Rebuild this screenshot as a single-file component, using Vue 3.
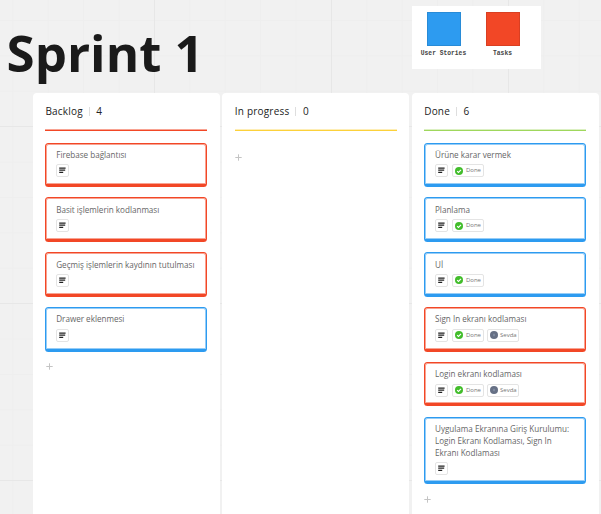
<script setup>
const columns = [
  {
    name: 'Backlog', count: 4, tone: 'red',
    cards: [
      { title: 'Firebase bağlantısı', tone: 'red' },
      { title: 'Basit işlemlerin kodlanması', tone: 'red' },
      { title: 'Geçmiş işlemlerin kaydının tutulması', tone: 'red' },
      { title: 'Drawer eklenmesi', tone: 'blue' },
    ],
  },
  { name: 'In progress', count: 0, tone: 'yellow', cards: [] },
  {
    name: 'Done', count: 6, tone: 'green',
    cards: [
      { title: 'Ürüne karar vermek', tone: 'blue', done: true },
      { title: 'Planlama', tone: 'blue', done: true },
      { title: 'Uİ', tone: 'blue', done: true },
      { title: 'Sign In ekranı kodlaması', tone: 'red', done: true, owner: 'Sevda' },
      { title: 'Login ekranı kodlaması', tone: 'red', done: true, owner: 'Sevda' },
      { title: 'Uygulama Ekranına Giriş Kurulumu: Login Ekranı Kodlaması, Sign In Ekranı Kodlaması', tone: 'blue' },
    ],
  },
]
const legend = [
  { label: 'User Stories', tone: 'blue' },
  { label: 'Tasks', tone: 'red' },
]
</script>

<template>
  <main class="board">
    <header class="top">
      <h1>Sprint 1</h1>
      <div class="legend">
        <div v-for="l in legend" :key="l.label" class="legend-item">
          <div class="swatch" :class="l.tone"></div>
          <span>{{ l.label }}</span>
        </div>
      </div>
    </header>
    <div class="columns">
      <section v-for="c in columns" :key="c.name" class="column">
        <div class="head" :class="c.tone">
          <span>{{ c.name }}</span><i></i><span>{{ c.count }}</span>
        </div>
        <div class="rule" :class="c.tone"></div>
        <div class="cards">
          <article v-for="k in c.cards" :key="k.title" class="card" :class="k.tone">
            <p>{{ k.title }}</p>
            <div class="tags">
              <span class="tag note">
                <svg width="7" height="7" viewBox="0 0 7 7"><path d="M.2 1h6.4M.2 3.2h6M.2 5.4h4" stroke="#222" stroke-width="1.25" /></svg>
              </span>
              <span v-if="k.done" class="tag status">
                <svg width="8" height="8" viewBox="0 0 8 8"><circle cx="4" cy="4" r="4" fill="#42bd2b" /><path d="M2.1 4.1l1.4 1.4 2.5-2.6" fill="none" stroke="#fff" stroke-width="1.1" /></svg>
                <b>Done</b>
              </span>
              <span v-if="k.owner" class="tag owner">
                <svg width="8" height="8" viewBox="0 0 8 8"><circle cx="4" cy="4" r="4" fill="#667085" /><path d="M4 2.8v2.4" stroke="#9aa7bd" stroke-width=".9" /></svg>
                <b>{{ k.owner }}</b>
              </span>
            </div>
          </article>
        </div>
        <svg class="plus" width="7" height="7" viewBox="0 0 7 7"><path d="M3.5 0.3v6.4M.3 3.5h6.4" stroke="#c4c4c4" stroke-width="1" /></svg>
      </section>
    </div>
  </main>
</template>

<style>
body { background: #f1f1f1; }
</style>

<style scoped>
* { box-sizing: border-box; }
.board {
  width: 601px; height: 514px; overflow: hidden;
  font-family: "Open Sans", "Noto Sans", sans-serif;
  background-color: #f1f1f1;
  background-image:
    linear-gradient(90deg, #e7e7e7 1px, transparent 1px),
    linear-gradient(#e7e7e7 1px, transparent 1px),
    linear-gradient(90deg, #eeeeee 1px, transparent 1px),
    linear-gradient(#eeeeee 1px, transparent 1px);
  background-size: 177px 177px, 177px 177px, 35.4px 35.4px, 35.4px 35.4px;
  background-position: 154px 0, 0 126px, 12.4px 0, 0 20px;
}
.top { height: 93px; display: flex; justify-content: space-between; padding: 6px 60px 0 6.6px; }
h1 { margin: 11px 0 0; font-size: 51px; line-height: 70px; font-weight: 700; color: #1a1a1a; white-space: nowrap; }
.legend { width: 129px; height: 63px; background: #fff; display: flex; padding: 6px 8px 0 2px; }
.legend-item { width: 59px; flex: none; display: flex; flex-direction: column; align-items: center; }
.swatch { width: 34px; height: 34px; border: 1px solid #0000001a; background: var(--tone); }
.legend-item span { margin-top: 4px; font: 700 6.3px/8px "Liberation Mono", monospace; color: #444; white-space: nowrap; }
.red { --tone: #f24726; --soft: #f2472680; }
.blue { --tone: #2d9bf0; --soft: #2d9bf080; }
.yellow { --tone: #fcd13a; --soft: #fcd13a60; }
.green { --tone: #9fd75c; --soft: #9fd75c60; }
.columns { display: flex; gap: 2.4px; padding-left: 33px; }
.column { width: 187px; flex: none; height: 421px; background: #fff; border-radius: 4px 4px 0 0; padding: 0 12.6px 0 12.4px; }
.head { height: 36px; display: flex; align-items: flex-start; padding-top: 11px; font-size: 10px; line-height: 15px; letter-spacing: .2px; color: #222; }
.head i { width: 1px; height: 9px; margin: 3px 6.5px 0 6px; background: #dedede; }
.rule { height: 2px; background: linear-gradient(var(--soft) 50%, var(--tone) 50%); }
.cards { display: flex; flex-direction: column; gap: 10.2px; padding-top: 11.6px; }
.card { height: 44.6px; border: 1px solid var(--tone); border-bottom-width: 3px; border-radius: 3.5px; padding: 5.4px 10px 0 10px; box-shadow: inset 0 0 0 1px var(--soft); }
.card:nth-child(6) { height: 67.5px; }
.card p { margin: 0 0 0 -.2px; font-size: 8.1px; line-height: 12px; color: #666; }
.card:nth-child(6) p { padding-right: 3px; }
.tags { display: flex; gap: 3.5px; margin-top: 3.4px; }
.tag { height: 13px; border: 1px solid #e4e4e4; border-radius: 2px; display: flex; align-items: center; }
.note { width: 13px; justify-content: center; }
.status, .owner { width: 32px; padding-left: 2.3px; gap: 3px; }
.tag svg { flex: none; display: block; }
.tag b { font-size: 6px; line-height: 10px; font-weight: 400; color: #777; position: relative; top: -.5px; }
.owner b { margin-left: -1px; }
.owner { padding-left: 1.8px; }
.plus { display: block; margin: 11.9px 0 0 .2px; }
</style>
